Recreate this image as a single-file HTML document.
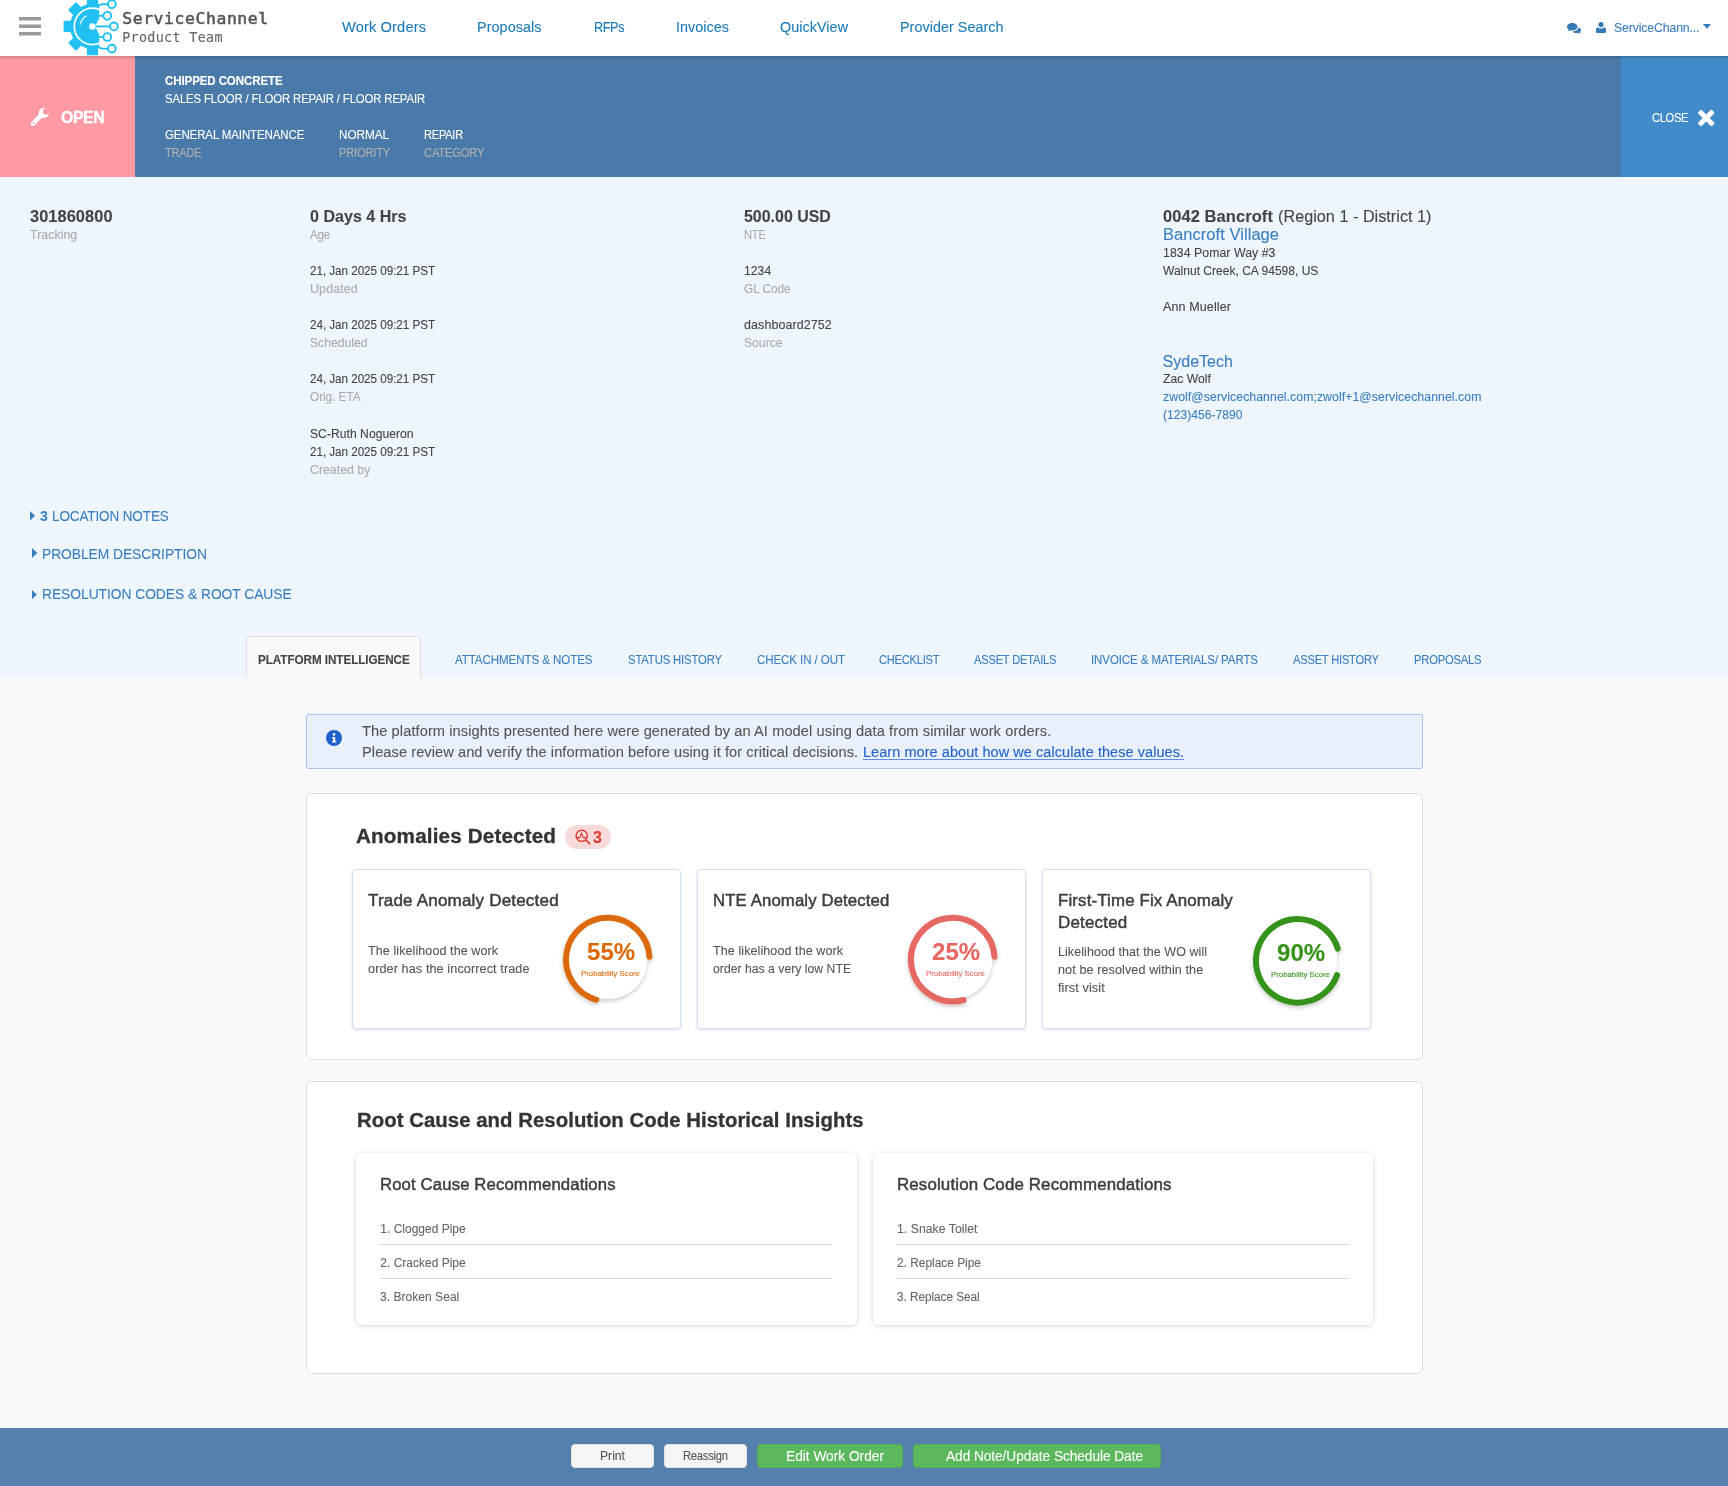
<!DOCTYPE html>
<html lang="en"><head><meta charset="utf-8"><title>Work Order 301860800</title>
<style>
html,body{margin:0;padding:0}
body{width:1728px;height:1486px;position:relative;overflow:hidden;background:#f9f9f9;font-family:"Liberation Sans", sans-serif;color:#444}
.t{position:absolute;white-space:pre;margin:0;transform-origin:0 0;-webkit-text-stroke:0.1px}
.b{position:absolute;box-sizing:border-box}
svg{position:absolute;overflow:visible}
a{color:inherit}
#app{position:absolute;left:0;top:0;width:1728px;height:1486px;transform:translateZ(0)}
</style></head><body><div id="app">
<div class="b" style="left:0;top:0;width:1728px;height:56px;background:#fff"></div>
<div class="b" style="left:0;top:177px;width:1728px;height:501px;background:#eef5fd"></div>
<div class="b" style="left:0;top:56px;width:1728px;height:121px;background:#4a7aa9"></div>
<div class="b" style="left:0;top:56px;width:135px;height:121px;background:#ff99a3"></div>
<div class="b" style="left:1621px;top:56px;width:107px;height:121px;background:#428bca"></div>
<div class="b" style="left:0;top:56px;width:1728px;height:4px;background:linear-gradient(rgba(0,0,0,.18),rgba(0,0,0,0))"></div>
<svg style="left:19px;top:17px" width="22" height="19" viewBox="0 0 22 19"><g fill="#999"><rect x="0" y="0" width="22" height="3.5" rx="0.6"/><rect x="0" y="7.6" width="22" height="3.5" rx="0.6"/><rect x="0" y="15" width="22" height="3.5" rx="0.6"/></g></svg>
<svg style="left:60px;top:0" width="64" height="56" viewBox="60 0 64 56">
<defs><clipPath id="gc"><path d="M60 0H99.3V56H60Z"/></clipPath></defs>
<g clip-path="url(#gc)" fill="#21c0f3">
<g transform="translate(92.5 26.4)">
<circle r="22.6"/>
<g id="th"><rect x="-5.6" y="-28.9" width="11.2" height="9" rx="1"/></g>
<rect x="-5.6" y="-28.9" width="11.2" height="9" rx="1" transform="rotate(-45)"/>
<rect x="-5.6" y="-28.9" width="11.2" height="9" rx="1" transform="rotate(-90)"/>
<rect x="-5.6" y="-28.9" width="11.2" height="9" rx="1" transform="rotate(-135)"/>
<rect x="-5.6" y="-28.9" width="11.2" height="9" rx="1" transform="rotate(180)"/>
<circle r="18.2" fill="none" stroke="#fff" stroke-width="1.7"/>
<path d="M6.8 -9.5 L1 0 L6.8 9.5 L6.8 30 L30 30 L30 -30 L6.8 -30Z" fill="#fff" opacity="0"/>
</g></g>
<g transform="translate(92.5 26.4)">
<path d="M7 -8.6 L2.5 0 L7 8.6 L7 17 L14 17 L14 -17 L7 -17 Z" fill="#fff"/>
<path d="M-12.2 -2.2 A 12.6 12.6 0 0 1 -6.3 -10.4" fill="none" stroke="#fff" stroke-width="1.3" stroke-linecap="round"/>
<circle r="3.2" fill="#fff"/>
<g fill="none" stroke="#21c0f3" stroke-width="1.9">
<path d="M3 0 H17.5"/><circle cx="21.4" cy="0" r="3.9" fill="#fff"/>
<path d="M6 -10.6 H11"/><circle cx="14.8" cy="-10.6" r="3.9" fill="#fff"/>
<path d="M6 10.6 H11"/><circle cx="14.8" cy="10.6" r="3.9" fill="#fff"/>
<path d="M5 -20.5 L9.5 -22.2 H15.5"/><circle cx="19.4" cy="-22.2" r="3.9" fill="#fff"/>
<path d="M5 20.5 L9.5 22.2 H15.5"/><circle cx="19.4" cy="22.2" r="3.9" fill="#fff"/>
</g></g>
</svg>
<svg style="left:1567px;top:22.5px" width="14" height="11.5" viewBox="0 0 28 23"><g fill="#337ab7"><path d="M10.5 0C4.7 0 0 3.4 0 7.6c0 2.3 1.4 4.3 3.6 5.7-.3 1.2-1 2.3-2.1 3.2 2.2-.1 4.2-.9 5.6-2 1.1.3 2.2.4 3.4.4 5.8 0 10.5-3.3 10.5-7.4S16.300 0 10.500 0z"/><path d="M23.600 7.400c0 .3 0 .6 0 .9 2.600 1.200 4.400 3.200 4.400 5.500 0 1.900-1.100 3.500-2.800 4.700.300 1.200 1 2.300 2.100 3.200-2.200-.1-4.200-.9-5.600-2-.900.2-1.900.400-2.900.400-3.300 0-6.200-1.300-7.700-3.300 7-.1 12.500-4.200 12.500-9.400z"/></g></svg>
<svg style="left:1596px;top:22px" width="10" height="11" viewBox="0 0 20 22"><g fill="#337ab7"><circle cx="10" cy="5.2" r="5.2"/><path d="M3.200 10.500c1.700 1.600 4 2.500 6.800 2.500s5.100-.9 6.800-2.500c2.200.700 3.200 3 3.200 6.500v1.800c0 1.800-1.300 3.200-3.200 3.200H3.200C1.300 22 0 20.600 0 18.800V17c0-3.500 1-5.800 3.200-6.500z"/></g></svg>
<svg style="left:1703px;top:24.2px" width="8" height="5" viewBox="0 0 8 5"><path d="M0 0H8L4 4.800Z" fill="#337ab7"/></svg>
<svg style="left:28px;top:106px" width="24" height="24" viewBox="28 106 24 24"><defs><mask id="wm" maskUnits="userSpaceOnUse" x="28" y="106" width="24" height="24"><rect x="28" y="106" width="24" height="24" fill="#fff"/><circle cx="46.100" cy="111.400" r="3.150" fill="#000"/><circle cx="33.500" cy="122.900" r="0.850" fill="#000"/></mask></defs><g mask="url(#wm)" fill="#fff"><circle cx="43.850" cy="112.900" r="5.150"/><path d="M32.900 123.700L41.500 115" stroke="#fff" stroke-width="4.600" stroke-linecap="round" fill="none"/></g></svg>
<svg style="left:1696px;top:108px" width="21" height="21" viewBox="1696 108 21 21"><g fill="#fff" transform="translate(1706.2 118.05)"><rect x="-9.800" y="-2.500" width="19.600" height="5" rx="1.300" transform="rotate(45)"/><rect x="-9.800" y="-2.500" width="19.600" height="5" rx="1.300" transform="rotate(-45)"/></g></svg>
<svg style="left:30.2px;top:510.5px" width="5" height="9.6" viewBox="0 0 5 9.6"><path d="M0 0L5 4.8L0 9.6Z" fill="#3a7fc0"/></svg>
<svg style="left:31.7px;top:548.4px" width="5.3" height="10" viewBox="0 0 5.3 10"><path d="M0 0L5.3 5.0L0 10Z" fill="#3a7fc0"/></svg>
<svg style="left:31.7px;top:589.6px" width="4.8" height="9.2" viewBox="0 0 4.8 9.2"><path d="M0 0L4.8 4.6L0 9.2Z" fill="#3a7fc0"/></svg>
<div class="b" style="left:246px;top:636px;width:175px;height:42px;background:#f9f9f9;border:1px solid #ddd;border-bottom:none;border-radius:4px 4px 0 0"></div>
<div class="b" style="left:306px;top:714px;width:1117px;height:55px;background:#e9f0fb;border:1px solid #a9c4f1;border-radius:2px"></div>
<svg style="left:325.700px;top:729.900px" width="16" height="16" viewBox="0 0 16 16"><circle cx="8" cy="8" r="8" fill="#1f62cd"/><rect x="6.900" y="3.200" width="2.300" height="2.300" fill="#fff"/><path d="M6 6.900H9.200V11.300H10.200V12.600H6V11.300H7V8.200H6Z" fill="#fff"/></svg>
<div class="b" style="left:306px;top:793px;width:1117px;height:267px;background:#fff;border:1px solid #dcdcdc;border-radius:6px"></div>
<div class="b" style="left:565px;top:825px;width:46px;height:24px;background:#f8dada;border-radius:12px"></div>
<svg style="left:574.500px;top:828.600px" width="16" height="16" viewBox="0 0 16 16"><g fill="none" stroke="#e03a2f" stroke-width="1.400"><circle cx="6.700" cy="6.800" r="5.600"/><path d="M10.800 10.900L15 15.100" stroke-width="1.600"/><path d="M1.600 8.600H4.800L6.500 4.200L8.300 8.600H11.600" stroke-width="1.100"/></g></svg>
<div class="b" style="left:352.0px;top:869px;width:329px;height:160px;background:#fff;border:1px solid #d6e0f5;border-radius:4px;box-shadow:0 1px 3px rgba(60,80,120,.18)"></div>
<svg style="left:0;top:0" width="1728" height="1486" viewBox="0 0 1728 1486"><defs><filter id="sh55" x="-30%" y="-30%" width="160%" height="160%"><feDropShadow dx="0" dy="2" stdDeviation="2" flood-color="#000" flood-opacity="0.22"/></filter></defs><g filter="url(#sh55)"><circle cx="607.75" cy="959.6" r="39.5" fill="#fff"/><path d="M649.45 956.68A41.8 41.8 0 1 0 596.23 999.78" fill="none" stroke="#dc6a08" stroke-width="6" stroke-linecap="round"/></g></svg>
<div class="b" style="left:697.0px;top:869px;width:329px;height:160px;background:#fff;border:1px solid #d6e0f5;border-radius:4px;box-shadow:0 1px 3px rgba(60,80,120,.18)"></div>
<svg style="left:0;top:0" width="1728" height="1486" viewBox="0 0 1728 1486"><defs><filter id="sh25" x="-30%" y="-30%" width="160%" height="160%"><feDropShadow dx="0" dy="2" stdDeviation="2" flood-color="#000" flood-opacity="0.22"/></filter></defs><g filter="url(#sh25)"><circle cx="952.75" cy="959.6" r="39.5" fill="#fff"/><path d="M994.45 956.68A41.8 41.8 0 1 0 963.57 999.98" fill="none" stroke="#e66762" stroke-width="6" stroke-linecap="round"/></g></svg>
<div class="b" style="left:1042.0px;top:869px;width:329px;height:160px;background:#fff;border:1px solid #d6e0f5;border-radius:4px;box-shadow:0 1px 3px rgba(60,80,120,.18)"></div>
<svg style="left:0;top:0" width="1728" height="1486" viewBox="0 0 1728 1486"><defs><filter id="sh90" x="-30%" y="-30%" width="160%" height="160%"><feDropShadow dx="0" dy="2" stdDeviation="2" flood-color="#000" flood-opacity="0.22"/></filter></defs><g filter="url(#sh90)"><circle cx="1297.75" cy="960.8" r="39.5" fill="#fff"/><path d="M1337.72 948.58A41.8 41.8 0 1 0 1337.03 975.10" fill="none" stroke="#35931a" stroke-width="6" stroke-linecap="round"/></g></svg>
<div class="b" style="left:306px;top:1081px;width:1117px;height:293px;background:#fff;border:1px solid #dcdcdc;border-radius:6px"></div>
<div class="b" style="left:356px;top:1153px;width:500.5px;height:172px;background:#fff;border-radius:6px;box-shadow:0 1px 5px rgba(0,0,0,.18)"></div>
<div class="b" style="left:380.0px;top:1244px;width:452.3px;height:1px;background:#d9d9d9"></div>
<div class="b" style="left:380.0px;top:1278px;width:452.3px;height:1px;background:#d9d9d9"></div>
<div class="b" style="left:872.8px;top:1153px;width:500.5px;height:172px;background:#fff;border-radius:6px;box-shadow:0 1px 5px rgba(0,0,0,.18)"></div>
<div class="b" style="left:896.8px;top:1244px;width:452.3px;height:1px;background:#d9d9d9"></div>
<div class="b" style="left:896.8px;top:1278px;width:452.3px;height:1px;background:#d9d9d9"></div>
<div class="b" style="left:0;top:1428px;width:1728px;height:58px;background:#5580ad"></div>
<div class="b" style="left:571px;top:1444px;width:83px;height:24px;background:#f5f5f5;border:1px solid #e3e3e3;border-radius:4px"></div>
<div class="b" style="left:664px;top:1444px;width:83px;height:24px;background:#f5f5f5;border:1px solid #e3e3e3;border-radius:4px"></div>
<div class="b" style="left:757px;top:1444px;width:146px;height:24px;background:#5cb85c;border:1px solid #55ad55;border-radius:4px"></div>
<div class="b" style="left:913px;top:1444px;width:248px;height:24px;background:#5cb85c;border:1px solid #55ad55;border-radius:4px"></div>
<div class="t" style='left:122.20px;top:11.00px;font-size:16.4px;line-height:16.4px;color:#555;font-family:"DejaVu Sans Mono", "Liberation Mono", monospace;letter-spacing:0.603px;-webkit-text-stroke:0.55px #555;'>ServiceChannel</div>
<div class="t" style='left:122.20px;top:31.00px;font-size:13.4px;line-height:13.4px;color:#666;font-family:"DejaVu Sans Mono", "Liberation Mono", monospace;letter-spacing:0.323px;'>Product Team</div>
<div class="t" style='left:341.50px;top:20.00px;font-size:14px;line-height:14px;color:#1b7ab8;letter-spacing:0.117px;transform:scaleX(1.0465);'>Work Orders</div>
<div class="t" style='left:477.00px;top:20.00px;font-size:14px;line-height:14px;color:#1b7ab8;letter-spacing:0.068px;transform:scaleX(1.0269);'>Proposals</div>
<div class="t" style='left:593.50px;top:20.00px;font-size:14px;line-height:14px;color:#1b7ab8;letter-spacing:-0.415px;transform:scaleX(0.9036);'>RFPs</div>
<div class="t" style='left:675.50px;top:20.00px;font-size:14px;line-height:14px;color:#1b7ab8;letter-spacing:0.057px;transform:scaleX(1.0240);'>Invoices</div>
<div class="t" style='left:780.00px;top:20.00px;font-size:14px;line-height:14px;color:#1b7ab8;letter-spacing:0.064px;transform:scaleX(1.0240);'>QuickView</div>
<div class="t" style='left:899.50px;top:20.00px;font-size:14px;line-height:14px;color:#1b7ab8;letter-spacing:0.054px;transform:scaleX(1.0232);'>Provider Search</div>
<div class="t" style='left:1614.00px;top:21.00px;font-size:13px;line-height:13px;color:#3a7fc0;letter-spacing:-0.133px;transform:scaleX(0.9432);'>ServiceChann...</div>
<div class="t" style='left:60.60px;top:109.00px;font-size:17px;line-height:17px;font-weight:700;color:#fff;letter-spacing:-0.412px;transform:scaleX(0.9286);-webkit-text-stroke:0.4px #fff;'>OPEN</div>
<div class="t" style='left:165.40px;top:75.00px;font-size:12px;line-height:12px;font-weight:700;color:#fff;letter-spacing:-0.111px;transform:scaleX(0.9612);'>CHIPPED CONCRETE</div>
<div class="t" style='left:165.40px;top:93.00px;font-size:12px;line-height:12px;color:#fff;letter-spacing:-0.133px;transform:scaleX(0.9460);'>SALES FLOOR / FLOOR REPAIR / FLOOR REPAIR</div>
<div class="t" style='left:165.40px;top:129.00px;font-size:12px;line-height:12px;color:#fff;letter-spacing:-0.119px;transform:scaleX(0.9584);'>GENERAL MAINTENANCE</div>
<div class="t" style='left:338.80px;top:129.00px;font-size:12px;line-height:12px;color:#fff;letter-spacing:-0.069px;transform:scaleX(0.9804);'>NORMAL</div>
<div class="t" style='left:423.80px;top:129.00px;font-size:12px;line-height:12px;color:#fff;letter-spacing:-0.249px;transform:scaleX(0.9213);'>REPAIR</div>
<div class="t" style='left:165.40px;top:147.00px;font-size:12px;line-height:12px;color:#aeb0b3;letter-spacing:-0.275px;transform:scaleX(0.9249);'>TRADE</div>
<div class="t" style='left:338.80px;top:147.00px;font-size:12px;line-height:12px;color:#aeb0b3;letter-spacing:-0.211px;transform:scaleX(0.9276);'>PRIORITY</div>
<div class="t" style='left:423.80px;top:147.00px;font-size:12px;line-height:12px;color:#aeb0b3;letter-spacing:-0.223px;transform:scaleX(0.9339);'>CATEGORY</div>
<div class="t" style='left:1651.60px;top:112.00px;font-size:12px;line-height:12px;color:#fff;letter-spacing:-0.291px;transform:scaleX(0.9210);'>CLOSE</div>
<div class="t" style='left:30.00px;top:209.00px;font-size:16px;line-height:16px;font-weight:700;letter-spacing:0.074px;transform:scaleX(1.0225);'>301860800</div>
<div class="t" style='left:30.00px;top:229.00px;font-size:12px;line-height:12px;color:#aaaaaa;letter-spacing:0.056px;transform:scaleX(1.0267);'>Tracking</div>
<div class="t" style='left:309.70px;top:209.00px;font-size:16px;line-height:16px;font-weight:700;letter-spacing:0.010px;transform:scaleX(1.0034);'>0 Days 4 Hrs</div>
<div class="t" style='left:309.70px;top:229.00px;font-size:12px;line-height:12px;color:#aaaaaa;letter-spacing:-0.138px;transform:scaleX(0.9628);'>Age</div>
<div class="t" style='left:309.70px;top:265.00px;font-size:12px;line-height:12px;letter-spacing:-0.053px;transform:scaleX(0.9749);'>21, Jan 2025 09:21 PST</div>
<div class="t" style='left:309.70px;top:283.00px;font-size:12px;line-height:12px;color:#aaaaaa;letter-spacing:0.097px;transform:scaleX(1.0401);'>Updated</div>
<div class="t" style='left:309.70px;top:319.00px;font-size:12px;line-height:12px;letter-spacing:-0.053px;transform:scaleX(0.9749);'>24, Jan 2025 09:21 PST</div>
<div class="t" style='left:309.70px;top:337.00px;font-size:12px;line-height:12px;color:#aaaaaa;letter-spacing:0.027px;transform:scaleX(1.0117);'>Scheduled</div>
<div class="t" style='left:309.70px;top:373.00px;font-size:12px;line-height:12px;letter-spacing:-0.053px;transform:scaleX(0.9749);'>24, Jan 2025 09:21 PST</div>
<div class="t" style='left:309.70px;top:391.00px;font-size:12px;line-height:12px;color:#aaaaaa;letter-spacing:-0.038px;transform:scaleX(0.9827);'>Orig. ETA</div>
<div class="t" style='left:309.70px;top:428.00px;font-size:12px;line-height:12px;letter-spacing:0.025px;transform:scaleX(1.0113);'>SC-Ruth Nogueron</div>
<div class="t" style='left:309.70px;top:446.00px;font-size:12px;line-height:12px;letter-spacing:-0.053px;transform:scaleX(0.9749);'>21, Jan 2025 09:21 PST</div>
<div class="t" style='left:309.70px;top:464.00px;font-size:12px;line-height:12px;color:#aaaaaa;letter-spacing:0.043px;transform:scaleX(1.0204);'>Created by</div>
<div class="t" style='left:743.60px;top:209.00px;font-size:16px;line-height:16px;font-weight:700;letter-spacing:-0.008px;transform:scaleX(0.9977);'>500.00 USD</div>
<div class="t" style='left:743.60px;top:229.00px;font-size:12px;line-height:12px;color:#aaaaaa;letter-spacing:-0.281px;transform:scaleX(0.9344);'>NTE</div>
<div class="t" style='left:743.60px;top:265.00px;font-size:12px;line-height:12px;letter-spacing:0.041px;transform:scaleX(1.0140);'>1234</div>
<div class="t" style='left:743.60px;top:283.00px;font-size:12px;line-height:12px;color:#aaaaaa;letter-spacing:-0.038px;transform:scaleX(0.9859);'>GL Code</div>
<div class="t" style='left:743.60px;top:319.00px;font-size:12px;line-height:12px;letter-spacing:0.088px;transform:scaleX(1.0394);'>dashboard2752</div>
<div class="t" style='left:743.60px;top:337.00px;font-size:12px;line-height:12px;color:#aaaaaa;letter-spacing:0.018px;transform:scaleX(1.0073);'>Source</div>
<div class="t" style='left:1162.60px;top:209.00px;font-size:16px;line-height:16px;font-weight:700;letter-spacing:0.082px;transform:scaleX(1.0289);'>0042 Bancroft</div>
<div class="t" style='left:1277.50px;top:209.00px;font-size:16px;line-height:16px;letter-spacing:0.026px;transform:scaleX(1.0116);'>(Region 1 - District 1)</div>
<div class="t" style='left:1162.60px;top:227.00px;font-size:16px;line-height:16px;color:#3a7fc0;letter-spacing:0.068px;transform:scaleX(1.0283);'>Bancroft Village</div>
<div class="t" style='left:1162.60px;top:247.00px;font-size:12px;line-height:12px;letter-spacing:0.053px;transform:scaleX(1.0237);'>1834 Pomar Way #3</div>
<div class="t" style='left:1162.60px;top:265.00px;font-size:12px;line-height:12px;letter-spacing:0.004px;transform:scaleX(1.0021);'>Walnut Creek, CA 94598, US</div>
<div class="t" style='left:1162.60px;top:301.00px;font-size:12px;line-height:12px;letter-spacing:0.093px;transform:scaleX(1.0453);'>Ann Mueller</div>
<div class="t" style='left:1162.60px;top:354.00px;font-size:16px;line-height:16px;color:#3a7fc0;letter-spacing:0.005px;'>SydeTech</div>
<div class="t" style='left:1162.60px;top:373.00px;font-size:12px;line-height:12px;letter-spacing:0.027px;transform:scaleX(1.0123);'>Zac Wolf</div>
<div class="t" style='left:1162.60px;top:391.00px;font-size:12px;line-height:12px;color:#3a7fc0;letter-spacing:0.050px;transform:scaleX(1.0249);'>zwolf@servicechannel.com;zwolf+1@servicechannel.com</div>
<div class="t" style='left:1162.60px;top:409.00px;font-size:12px;line-height:12px;color:#3a7fc0;letter-spacing:0.014px;transform:scaleX(1.0063);'>(123)456-7890</div>
<div class="t" style='left:40.00px;top:509.00px;font-size:14px;line-height:14px;font-weight:700;color:#3a7fc0;letter-spacing:-0.297px;'>3</div>
<div class="t" style='left:51.70px;top:509.00px;font-size:14px;line-height:14px;color:#3a7fc0;letter-spacing:-0.117px;transform:scaleX(0.9642);'>LOCATION NOTES</div>
<div class="t" style='left:42.30px;top:547.00px;font-size:14px;line-height:14px;color:#3a7fc0;letter-spacing:-0.044px;transform:scaleX(0.9860);'>PROBLEM DESCRIPTION</div>
<div class="t" style='left:41.70px;top:587.00px;font-size:14px;line-height:14px;color:#3a7fc0;letter-spacing:-0.040px;transform:scaleX(0.9869);'>RESOLUTION CODES &amp; ROOT CAUSE</div>
<div class="t" style='left:257.50px;top:654.00px;font-size:12px;line-height:12px;font-weight:700;letter-spacing:-0.068px;transform:scaleX(0.9747);'>PLATFORM INTELLIGENCE</div>
<div class="t" style='left:455.00px;top:654.00px;font-size:12px;line-height:12px;color:#3a7fc0;letter-spacing:-0.097px;transform:scaleX(0.9650);'>ATTACHMENTS &amp; NOTES</div>
<div class="t" style='left:627.50px;top:654.00px;font-size:12px;line-height:12px;color:#3a7fc0;letter-spacing:-0.159px;transform:scaleX(0.9426);'>STATUS HISTORY</div>
<div class="t" style='left:756.50px;top:654.00px;font-size:12px;line-height:12px;color:#3a7fc0;letter-spacing:-0.093px;transform:scaleX(0.9622);'>CHECK IN / OUT</div>
<div class="t" style='left:879.00px;top:654.00px;font-size:12px;line-height:12px;color:#3a7fc0;letter-spacing:-0.232px;transform:scaleX(0.9236);'>CHECKLIST</div>
<div class="t" style='left:974.00px;top:654.00px;font-size:12px;line-height:12px;color:#3a7fc0;letter-spacing:-0.205px;transform:scaleX(0.9255);'>ASSET DETAILS</div>
<div class="t" style='left:1091.00px;top:654.00px;font-size:12px;line-height:12px;color:#3a7fc0;letter-spacing:-0.101px;transform:scaleX(0.9588);'>INVOICE &amp; MATERIALS/ PARTS</div>
<div class="t" style='left:1293.00px;top:654.00px;font-size:12px;line-height:12px;color:#3a7fc0;letter-spacing:-0.211px;transform:scaleX(0.9263);'>ASSET HISTORY</div>
<div class="t" style='left:1414.00px;top:654.00px;font-size:12px;line-height:12px;color:#3a7fc0;letter-spacing:-0.219px;transform:scaleX(0.9338);'>PROPOSALS</div>
<div class="t" style='left:362.30px;top:724.00px;font-size:14px;line-height:14px;color:#555;letter-spacing:0.089px;transform:scaleX(1.0436);'>The platform insights presented here were generated by an AI model using data from similar work orders.</div>
<div class="t" style='left:362.30px;top:745.00px;font-size:14px;line-height:14px;color:#555;letter-spacing:0.079px;transform:scaleX(1.0416);'>Please review and verify the information before using it for critical decisions. </div>
<div class="t" style='left:862.50px;top:745.00px;font-size:14px;line-height:14px;color:#1f62cd;letter-spacing:0.072px;transform:scaleX(1.0332);text-decoration:underline;text-decoration-thickness:1px;text-underline-offset:2px;text-decoration-color:rgba(31,98,205,.7);'>Learn more about how we calculate these values.</div>
<div class="t" style='left:356.30px;top:826.00px;font-size:20px;line-height:20px;font-weight:700;color:#333;letter-spacing:0.125px;transform:scaleX(1.0346);-webkit-text-stroke:0.3px #333;'>Anomalies Detected</div>
<div class="t" style='left:593.00px;top:830.00px;font-size:16px;line-height:16px;font-weight:700;color:#e03a2f;letter-spacing:0.294px;'>3</div>
<div class="t" style='left:367.90px;top:893.00px;font-size:16px;line-height:16px;color:#3d3d3d;letter-spacing:0.169px;transform:scaleX(1.0645);-webkit-text-stroke:0.45px #3d3d3d;'>Trade Anomaly Detected</div>
<div class="t" style='left:367.90px;top:945.00px;font-size:12px;line-height:12px;color:#555;letter-spacing:0.080px;transform:scaleX(1.0450);'>The likelihood the work</div>
<div class="t" style='left:367.90px;top:963.00px;font-size:12px;line-height:12px;color:#555;letter-spacing:0.091px;transform:scaleX(1.0535);'>order has the incorrect trade</div>
<div class="t" style='left:586.75px;top:940.00px;font-size:24px;line-height:24px;font-weight:700;color:#dc6a08;letter-spacing:0.019px;transform:scaleX(1.0024);'>55%</div>
<div class="t" style='left:580.95px;top:970.00px;font-size:8px;line-height:8px;color:#dc6a08;letter-spacing:-0.024px;transform:scaleX(0.9816);'>Probability Score</div>
<div class="t" style='left:712.90px;top:893.00px;font-size:16px;line-height:16px;color:#3d3d3d;letter-spacing:0.126px;transform:scaleX(1.0451);-webkit-text-stroke:0.45px #3d3d3d;'>NTE Anomaly Detected</div>
<div class="t" style='left:712.90px;top:945.00px;font-size:12px;line-height:12px;color:#555;letter-spacing:0.080px;transform:scaleX(1.0450);'>The likelihood the work</div>
<div class="t" style='left:712.90px;top:963.00px;font-size:12px;line-height:12px;color:#555;letter-spacing:0.028px;transform:scaleX(1.0145);'>order has a very low NTE</div>
<div class="t" style='left:931.75px;top:940.00px;font-size:24px;line-height:24px;font-weight:700;color:#e66762;letter-spacing:0.019px;transform:scaleX(1.0024);'>25%</div>
<div class="t" style='left:925.95px;top:970.00px;font-size:8px;line-height:8px;color:#e66762;letter-spacing:-0.024px;transform:scaleX(0.9816);'>Probability Score</div>
<div class="t" style='left:1057.90px;top:893.00px;font-size:16px;line-height:16px;color:#3d3d3d;letter-spacing:0.133px;transform:scaleX(1.0544);-webkit-text-stroke:0.45px #3d3d3d;'>First-Time Fix Anomaly</div>
<div class="t" style='left:1057.90px;top:915.00px;font-size:16px;line-height:16px;color:#3d3d3d;letter-spacing:0.174px;transform:scaleX(1.0603);-webkit-text-stroke:0.45px #3d3d3d;'>Detected</div>
<div class="t" style='left:1057.90px;top:946.00px;font-size:12px;line-height:12px;color:#555;letter-spacing:0.071px;transform:scaleX(1.0408);'>Likelihood that the WO will</div>
<div class="t" style='left:1057.90px;top:964.00px;font-size:12px;line-height:12px;color:#555;letter-spacing:0.087px;transform:scaleX(1.0502);'>not be resolved within the</div>
<div class="t" style='left:1057.90px;top:982.00px;font-size:12px;line-height:12px;color:#555;letter-spacing:0.079px;transform:scaleX(1.0581);'>first visit</div>
<div class="t" style='left:1276.75px;top:941.00px;font-size:24px;line-height:24px;font-weight:700;color:#35931a;letter-spacing:0.019px;transform:scaleX(1.0024);'>90%</div>
<div class="t" style='left:1270.95px;top:971.00px;font-size:8px;line-height:8px;color:#35931a;letter-spacing:-0.024px;transform:scaleX(0.9816);'>Probability Score</div>
<div class="t" style='left:356.50px;top:1110.00px;font-size:20px;line-height:20px;font-weight:700;color:#333;letter-spacing:0.055px;transform:scaleX(1.0165);-webkit-text-stroke:0.3px #333;'>Root Cause and Resolution Code Historical Insights</div>
<div class="t" style='left:380.30px;top:1177.00px;font-size:16px;line-height:16px;color:#3d3d3d;letter-spacing:0.126px;transform:scaleX(1.0444);-webkit-text-stroke:0.45px #3d3d3d;'>Root Cause Recommendations</div>
<div class="t" style='left:380.30px;top:1223.00px;font-size:12px;line-height:12px;color:#666;'>1. Clogged Pipe</div>
<div class="t" style='left:380.30px;top:1257.00px;font-size:12px;line-height:12px;color:#666;'>2. Cracked Pipe</div>
<div class="t" style='left:380.30px;top:1291.00px;font-size:12px;line-height:12px;color:#666;letter-spacing:0.011px;transform:scaleX(1.0055);'>3. Broken Seal</div>
<div class="t" style='left:897.10px;top:1177.00px;font-size:16px;line-height:16px;color:#3d3d3d;letter-spacing:0.145px;transform:scaleX(1.0538);-webkit-text-stroke:0.45px #3d3d3d;'>Resolution Code Recommendations</div>
<div class="t" style='left:897.10px;top:1223.00px;font-size:12px;line-height:12px;color:#666;letter-spacing:0.035px;transform:scaleX(1.0191);'>1. Snake Toilet</div>
<div class="t" style='left:897.10px;top:1257.00px;font-size:12px;line-height:12px;color:#666;letter-spacing:-0.013px;transform:scaleX(0.9935);'>2. Replace Pipe</div>
<div class="t" style='left:897.10px;top:1291.00px;font-size:12px;line-height:12px;color:#666;letter-spacing:-0.037px;transform:scaleX(0.9820);'>3. Replace Seal</div>
<div class="t" style='left:600.00px;top:1450.00px;font-size:12px;line-height:12px;color:#555;letter-spacing:0.019px;transform:scaleX(1.0095);'>Print</div>
<div class="t" style='left:683.00px;top:1450.00px;font-size:12px;line-height:12px;color:#555;letter-spacing:-0.194px;transform:scaleX(0.9246);'>Reassign</div>
<div class="t" style='left:785.50px;top:1449.00px;font-size:14px;line-height:14px;color:#fff;letter-spacing:-0.038px;transform:scaleX(0.9842);'>Edit Work Order</div>
<div class="t" style='left:946.00px;top:1449.00px;font-size:14px;line-height:14px;color:#fff;letter-spacing:-0.056px;transform:scaleX(0.9773);'>Add Note/Update Schedule Date</div>
</div></body></html>
